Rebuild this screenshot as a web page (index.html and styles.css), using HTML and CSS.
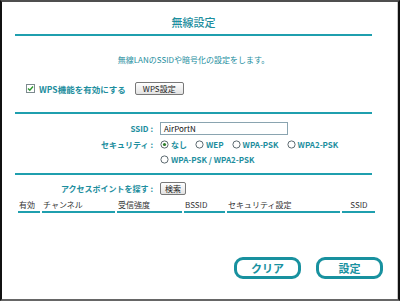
FILE: index.html
```html
<!DOCTYPE html>
<html lang="ja">

<head>
    <meta charset="UTF-8">
    <meta name="viewport" content="width=device-width, initial-scale=1.0">
    <title>無線設定</title>
    <link rel="stylesheet" href="styles.css">
</head>

<body>
    <div class="frame">
        <div class="panel">
            <h1 class="title">無線設定</h1>
            <p class="lead">無線LANのSSIDや暗号化の設定をします。</p>

            <div class="wps-row">
                <label class="check">
                    <span class="box">
                        <svg width="7" height="7" viewBox="0 0 7 7">
                            <path d="M1 3.5 L2.8 5.3 L6 1.5" fill="none" stroke="#2f9a2f" stroke-width="1.4" />
                        </svg>
                    </span>
                    WPS機能を有効にする
                </label>
                <div class="btn wps-btn">WPS設定</div>
            </div>

            <div class="section fields">
                <span class="label">SSID :</span>
                <div class="input">AirPortN</div>

                <span class="label sec-label">セキュリティ :</span>
                <div class="radios">
                    <div class="radio-line">
                        <span class="radio">
                            <svg width="9" height="9" viewBox="0 0 9 9">
                                <circle cx="4.5" cy="4.5" r="3.6" fill="#fff" stroke="#5d6a70" />
                                <circle cx="4.5" cy="4.5" r="1.6" fill="#2e7d2a" />
                            </svg>なし
                        </span>
                        <span class="radio">
                            <svg width="9" height="9" viewBox="0 0 9 9">
                                <circle cx="4.5" cy="4.5" r="3.6" fill="#fff" stroke="#5d6a70" />
                            </svg>WEP
                        </span>
                        <span class="radio">
                            <svg width="9" height="9" viewBox="0 0 9 9">
                                <circle cx="4.5" cy="4.5" r="3.6" fill="#fff" stroke="#5d6a70" />
                            </svg>WPA-PSK
                        </span>
                        <span class="radio">
                            <svg width="9" height="9" viewBox="0 0 9 9">
                                <circle cx="4.5" cy="4.5" r="3.6" fill="#fff" stroke="#5d6a70" />
                            </svg>WPA2-PSK
                        </span>
                    </div>
                    <div class="radio-line">
                        <span class="radio">
                            <svg width="9" height="9" viewBox="0 0 9 9">
                                <circle cx="4.5" cy="4.5" r="3.6" fill="#fff" stroke="#5d6a70" />
                            </svg>WPA-PSK / WPA2-PSK
                        </span>
                    </div>
                </div>
            </div>

            <div class="section search">
                <span class="label">アクセスポイントを探す :</span>
                <div class="btn search-btn">検索</div>
            </div>

            <table class="ap-list">
                <thead>
                    <tr>
                        <th class="col-on">有効</th>
                        <th class="col-ch">チャンネル</th>
                        <th class="col-sig">受信強度</th>
                        <th class="col-bssid">BSSID</th>
                        <th class="col-sec">セキュリティ設定</th>
                        <th class="col-ssid">SSID</th>
                    </tr>
                </thead>
            </table>
        </div>

        <div class="actions">
            <div class="big-btn">クリア</div>
            <div class="big-btn">設定</div>
        </div>
    </div>
</body>

</html>
```

FILE: styles.css
```css
body {
    margin: 0;
    font-family: "Noto Sans CJK JP", "DejaVu Sans", sans-serif;
    background-color: #fff;
}

.frame {
    box-sizing: border-box;
    width: 400px;
    height: 301px;
    border-top: 2px solid #4f4f4f;
    border-left: 2px solid #111;
    border-right: 2px solid #111;
    border-bottom: 2px solid #666;
    box-shadow: inset -1px 0 0 #c8c8c8;
    display: flex;
    flex-direction: column;
}

.panel {
    margin: 0 26px 0 13px;
    color: #1d8e9e;
}

.title {
    margin: 0;
    padding: 12px 0 4px;
    font-size: 11px;
    line-height: 16px;
    font-weight: 500;
    text-align: center;
    border-bottom: 2px solid #1f9fae;
}

.lead {
    margin: 18px 0 0;
    font-size: 8px;
    line-height: 12px;
    text-align: center;
}

.wps-row {
    margin-top: 16px;
    height: 13px;
    padding-left: 11px;
    display: flex;
    align-items: center;
}

.check {
    display: flex;
    align-items: center;
    gap: 4px;
    font-size: 8.5px;
    font-weight: bold;
}

.box {
    width: 7px;
    height: 7px;
    border: 1px solid #7d8a8f;
    background: #fff;
    display: flex;
}

.btn {
    box-sizing: border-box;
    height: 13px;
    border: 1px solid #787878;
    border-radius: 2px;
    background: linear-gradient(#ffffff, #e2e2e2);
    color: #222;
    font-size: 8px;
    line-height: 11px;
    text-align: center;
}

.wps-btn {
    width: 49px;
    margin-left: 9px;
}

.section {
    border-top: 2px solid #1f9fae;
}

.fields {
    margin-top: 17px;
    padding-top: 8px;
    display: grid;
    grid-template-columns: 138px 1fr;
    column-gap: 7px;
    align-items: start;
}

.label {
    text-align: right;
    font-size: 8px;
    font-weight: bold;
    line-height: 13px;
}

.input {
    box-sizing: border-box;
    width: 128px;
    height: 13px;
    border: 1px solid #8aa4b0;
    padding-left: 3px;
    color: #111;
    font-size: 8px;
    line-height: 11px;
}

.sec-label {
    margin-top: 2px;
    line-height: 15px;
}

.radios {
    margin-top: 2px;
    font-size: 8px;
    font-weight: bold;
    line-height: 15px;
}

.radio-line {
    display: flex;
    gap: 8px;
}

.radio {
    display: flex;
    align-items: center;
    gap: 2px;
}

.search {
    margin-top: 6px;
    padding-top: 7px;
    display: grid;
    grid-template-columns: 138px auto;
    column-gap: 7px;
    justify-content: start;
}

.search-btn {
    width: 26px;
}

.ap-list {
    margin: 4px 0 0 1px;
    width: 355px;
    table-layout: fixed;
    border-spacing: 2px 0;
    color: #333;
}

.ap-list th {
    padding: 0 0 0 1px;
    font-size: 8px;
    font-weight: normal;
    line-height: 12px;
    text-align: left;
    border-bottom: 2px solid #1f9fae;
    white-space: nowrap;
    overflow: hidden;
}

.col-on { width: 21px; }
.col-ch { width: 72px; }
.col-sig { width: 64px; }
.col-bssid { width: 40px; }
.col-sec { width: 112px; }

.ap-list .col-ssid {
    width: 32px;
    text-align: center;
}

.actions {
    margin-top: auto;
    padding: 0 15px 20px 0;
    display: flex;
    justify-content: flex-end;
    gap: 15px;
}

.big-btn {
    box-sizing: border-box;
    width: 67px;
    height: 22px;
    border: 3px solid #18919f;
    border-radius: 9px;
    background: #fff;
    color: #18919f;
    font-size: 11px;
    font-weight: bold;
    line-height: 16px;
    text-align: center;
}
```
